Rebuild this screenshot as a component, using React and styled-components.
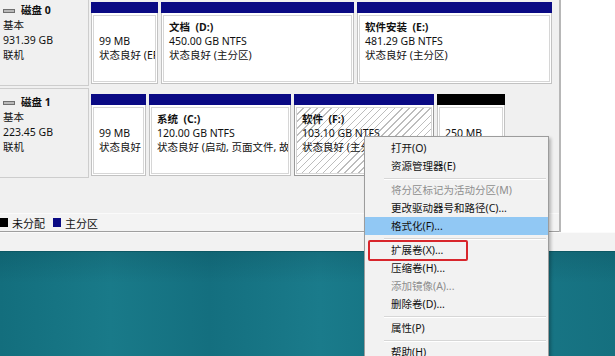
import React from 'react';
import styled, { createGlobalStyle, css } from 'styled-components';

const GlobalStyle = createGlobalStyle`
  html, body {
    margin: 0;
    padding: 0;
    background: #f0f0f0;
    overflow: hidden;
  }
  body {
    font-family: "Noto Sans", "Noto Sans CJK SC", sans-serif;
    font-size: 10.5px;
    color: #111;
  }
`;

const Screen = styled.div`
  position: relative;
  width: 615px;
  height: 356px;
  overflow: hidden;
  display: flex;
  flex-direction: column;
`;

const Window = styled.div`
  display: flex;
  height: 232px;
`;

const LeftPane = styled.div`
  width: 559px;
  border-right: 2px solid #b7b7b7;
  background: #f0f0f0;
  display: flex;
  flex-direction: column;
  overflow: hidden;
`;

const RightPane = styled.div`
  flex: 1;
  background: #fff;
`;

const DiskList = styled.div`
  display: flex;
  flex-direction: column;
  gap: 2px;
  margin-top: -4px;
`;

const DiskRow = styled.div`
  display: flex;
  height: 90px;
`;

const DiskLabel = styled.div`
  width: 89px;
  border: 1px solid #cdcdcd;
  border-left: none;
  padding: 6px 0 0 3px;
  line-height: 15px;
  box-sizing: border-box;
`;

const DiskTitle = styled.div`
  display: flex;
  align-items: center;
  gap: 6px;
  font-weight: 700;
`;

const Partitions = styled.div`
  display: flex;
  gap: 3px;
  padding: 6px 0 2px 2px;
`;

const Cell = styled.div`
  width: ${p => p.$w}px;
  display: flex;
  flex-direction: column;
  background: #fff;
  border-left: 1px solid #c2c2c2;
  border-right: 1px solid #c2c2c2;
  border-bottom: 1px solid #c2c2c2;
  box-sizing: border-box;
  ${p => p.$selected && css`
    border-color: #9a9a9a;
  `}
`;

const Bar = styled.div`
  height: 11px;
  margin: 0 -1px;
  background: ${p => p.$color};
`;

const Body = styled.div`
  flex: 1;
  margin: 2px 1px 1px;
  border: 1px solid #d6d6d6;
  padding: 4px 5px;
  line-height: 14px;
  white-space: pre;
  overflow: hidden;
  ${p => p.$hatched && css`
    background: repeating-linear-gradient(
      135deg,
      #fff 0px,
      #fff 4px,
      #bdbdbd 4px,
      #bdbdbd 5px
    );
  `}
`;

const PartName = styled.div`
  font-weight: 700;
`;

const Spacer = styled.div`
  flex: 1;
`;

const Legend = styled.div`
  height: 17px;
  border-top: 1px solid #fafafa;
  border-bottom: 1px solid #9f9f9f;
  background: #f3f3f3;
  display: flex;
  align-items: center;
  gap: 4px;
`;

const Swatch = styled.span`
  width: 8px;
  height: 9px;
  background: ${p => p.$color};
`;

const LegendText = styled.span`
  margin-right: 4px;
  font-size: 11px;
`;

const StatusBar = styled.div`
  height: 19px;
  background: #f2f2f2;
  border-top: 1px solid #fbfbfb;
  box-sizing: border-box;
`;

const Desktop = styled.div`
  flex: 1;
  border-top: 1px solid #0d5864;
  background:
    linear-gradient(180deg, rgba(0, 40, 50, 0.15), rgba(0, 0, 0, 0) 30%),
    linear-gradient(90deg, #136e7d 0%, #197a89 18%, #146f7f 34%, #1a7b8b 52%, #13707f 70%, #187686 86%, #15707f 100%);
`;

const Menu = styled.div`
  position: absolute;
  left: 364px;
  top: 136px;
  width: 185px;
  padding: 2px 0;
  background: #f2f2f2;
  border: 1px solid #9c9c9c;
  box-shadow: 2px 2px 3px rgba(0, 0, 0, 0.25);
  box-sizing: border-box;
  height: 240px;
`;

const Item = styled.div`
  position: relative;
  height: 18px;
  line-height: 18px;
  padding-left: 26px;
  color: ${p => (p.$disabled ? '#8e8e8e' : '#111')};
  ${p => p.$active && css`
    background: #91c8f4;
  `}
`;

const Separator = styled.div`
  height: 6px;
  margin-left: 19px;
  margin-right: 2px;
  display: flex;
  align-items: center;

  &::before {
    content: '';
    flex: 1;
    height: 1px;
    background: #d7d7d7;
    box-shadow: 0 1px 0 #fff;
  }
`;

const Highlight = styled.span`
  position: absolute;
  left: 3px;
  top: -1px;
  width: 100px;
  height: 21px;
  border: 2px solid #d8262c;
  border-radius: 2px;
  box-sizing: border-box;
`;

const DiskIcon = () => (
  <svg width="12" height="6" viewBox="0 0 12 6">
    <rect x="0.5" y="1.5" width="11" height="3" fill="#b9b9b9" stroke="#6f6f6f" strokeWidth="1" />
  </svg>
);

const disks = [
  {
    name: '磁盘 0',
    size: '931.39 GB',
    parts: [
      { w: 67, color: '#0a0a84', lines: [' ', '99 MB', '状态良好 (EFI 系统分区)'] },
      { w: 193, color: '#0a0a84', lines: ['文档  (D:)', '450.00 GB NTFS', '状态良好 (主分区)'] },
      { w: 195, color: '#0a0a84', lines: ['软件安装  (E:)', '481.29 GB NTFS', '状态良好 (主分区)'] },
    ],
  },
  {
    name: '磁盘 1',
    size: '223.45 GB',
    parts: [
      { w: 55, color: '#0a0a84', lines: [' ', '99 MB', '状态良好'] },
      { w: 142, color: '#0a0a84', lines: ['系统  (C:)', '120.00 GB NTFS', '状态良好 (启动, 页面文件, 故障转储, 主分区)'] },
      { w: 140, color: '#0a0a84', lines: ['软件  (F:)', '103.10 GB NTFS', '状态良好 (主分区)'], selected: true },
      { w: 68, color: '#000', lines: [' ', '250 MB', '未分配'] },
    ],
  },
];

const menu = [
  { label: '打开(O)' },
  { label: '资源管理器(E)' },
  { sep: true },
  { label: '将分区标记为活动分区(M)', disabled: true },
  { label: '更改驱动器号和路径(C)...' },
  { label: '格式化(F)...', active: true },
  { sep: true },
  { label: '扩展卷(X)...', marked: true },
  { label: '压缩卷(H)...' },
  { label: '添加镜像(A)...', disabled: true },
  { label: '删除卷(D)...' },
  { sep: true },
  { label: '属性(P)' },
  { sep: true },
  { label: '帮助(H)' },
];

export default function App() {
  return (
    <>
      <GlobalStyle />
      <Screen>
        <Window>
          <LeftPane>
            <DiskList>
              {disks.map(disk => (
                <DiskRow key={disk.name}>
                  <DiskLabel>
                    <DiskTitle>
                      <DiskIcon />
                      {disk.name}
                    </DiskTitle>
                    <div>基本</div>
                    <div>{disk.size}</div>
                    <div>联机</div>
                  </DiskLabel>
                  <Partitions>
                    {disk.parts.map((part, i) => (
                      <Cell key={i} $w={part.w} $selected={part.selected}>
                        <Bar $color={part.color} />
                        <Body $hatched={part.selected}>
                          <PartName>{part.lines[0]}</PartName>
                          <div>{part.lines[1]}</div>
                          <div>{part.lines[2]}</div>
                        </Body>
                      </Cell>
                    ))}
                  </Partitions>
                </DiskRow>
              ))}
            </DiskList>
            <Spacer />
            <Legend>
              <Swatch $color="#000" />
              <LegendText>未分配</LegendText>
              <Swatch $color="#0a0a84" />
              <LegendText>主分区</LegendText>
            </Legend>
          </LeftPane>
          <RightPane />
        </Window>
        <StatusBar />
        <Desktop />

        <Menu>
          {menu.map((m, i) =>
            m.sep ? (
              <Separator key={i} />
            ) : (
              <Item key={i} $disabled={m.disabled} $active={m.active}>
                {m.label}
                {m.marked && <Highlight />}
              </Item>
            )
          )}
        </Menu>
      </Screen>
    </>
  );
}
